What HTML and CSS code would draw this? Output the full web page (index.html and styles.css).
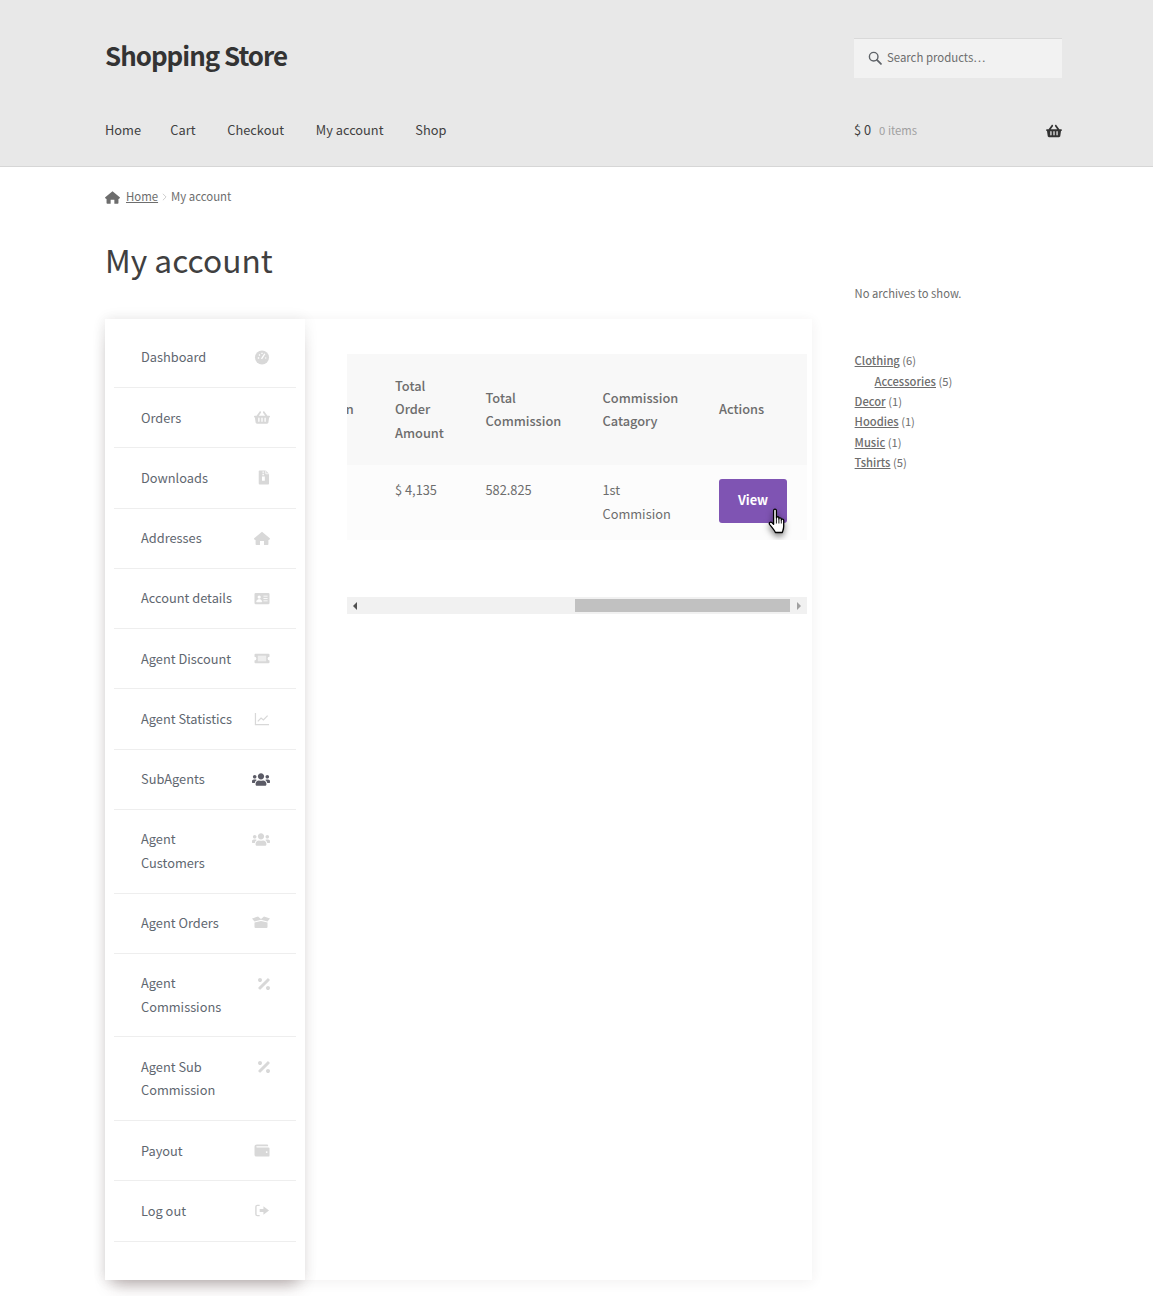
FILE: index.html
```html
<!DOCTYPE html>
<html lang="en">
<head>
    <meta charset="UTF-8">
    <meta name="viewport" content="width=device-width, initial-scale=1.0">
    <title>My account - Shopping Store</title>
    <link rel="stylesheet" href="styles.css">
</head>
<body>
    <header class="site-header">
        <div class="container">
            <div class="header-top">
                <a class="site-title" href="#">Shopping Store</a>
                <form class="search-box">
                    <svg class="search-icon" viewBox="0 0 16 16"><circle cx="6.5" cy="6.5" r="4.9" fill="none" stroke="currentColor" stroke-width="1.6"/><path d="M10.2 10.2l4.6 4.6" stroke="currentColor" stroke-width="2" stroke-linecap="round"/></svg>
                    <input class="search-input" type="text" placeholder="Search products…">
                </form>
            </div>
            <div class="header-nav">
                <nav class="main-nav">
                    <a href="#">Home</a>
                    <a href="#">Cart</a>
                    <a href="#">Checkout</a>
                    <a href="#">My account</a>
                    <a href="#">Shop</a>
                </nav>
                <a class="mini-cart" href="#">
                    <span class="cart-total">$ 0</span>
                    <span class="cart-count">0 items</span>
                    <svg class="cart-icon" viewBox="0 0 576 512"><path d="M576 216v16c0 13.255-10.745 24-24 24h-8l-26.113 182.788C514.509 462.435 494.257 480 470.37 480H105.63c-23.887 0-44.139-17.565-47.518-41.212L32 256h-8c-13.255 0-24-10.745-24-24v-16c0-13.255 10.745-24 24-24h67.341l106.78-146.821c10.395-14.292 30.407-17.453 44.701-7.058 14.293 10.395 17.453 30.408 7.058 44.701L170.477 192h235.046L326.12 82.821c-10.395-14.292-7.234-34.306 7.059-44.701 14.291-10.395 34.306-7.235 44.701 7.058L484.659 192H552c13.255 0 24 10.745 24 24zM312 392V280c0-13.255-10.745-24-24-24s-24 10.745-24 24v112c0 13.255 10.745 24 24 24s24-10.745 24-24zm112 0V280c0-13.255-10.745-24-24-24s-24 10.745-24 24v112c0 13.255 10.745 24 24 24s24-10.745 24-24zm-224 0V280c0-13.255-10.745-24-24-24s-24 10.745-24 24v112c0 13.255 10.745 24 24 24s24-10.745 24-24z"/></svg>
                </a>
            </div>
        </div>
    </header>

    <div class="container">
        <div class="breadcrumb">
            <svg class="crumb-home" viewBox="0 0 16 14"><path d="M8 .3l7.800 6.500a.5.5 0 0 1 .1.7l-.8.9a.5.5 0 0 1-.7 0v4.400a.8.8 0 0 1-.8.8H10V9.500H6v4.100H2.400a.8.8 0 0 1-.8-.8V8.400a.5.5 0 0 1-.7 0l-.8-.9a.5.5 0 0 1 .1-.7z"/></svg>
            <a href="#">Home</a>
            <svg class="crumb-sep" viewBox="0 0 6 10"><path d="M1 1l4 4-4 4" fill="none" stroke="currentColor" stroke-width="1.2"/></svg>
            <span>My account</span>
        </div>

        <div class="columns">
            <main class="primary">
                <h1 class="page-title">My account</h1>
                <div class="account-panel">
                    <ul class="account-menu">
                        <li class="menu-item"><a href="#">Dashboard</a>
                            <svg class="menu-icon" viewBox="0 0 16 16"><circle cx="8" cy="8" r="7.500"/><path d="M7.500 9.500l3.500-5.500M3.500 8.500h1.500M4.800 4.800l1 1M8 2.800v1.500M11.500 8.500h1" stroke="#fff" stroke-width="1.400" fill="none"/></svg></li>
                        <li class="menu-item"><a href="#">Orders</a>
                            <svg class="menu-icon" viewBox="0 0 576 512"><path d="M576 216v16c0 13.255-10.745 24-24 24h-8l-26.113 182.788C514.509 462.435 494.257 480 470.37 480H105.63c-23.887 0-44.139-17.565-47.518-41.212L32 256h-8c-13.255 0-24-10.745-24-24v-16c0-13.255 10.745-24 24-24h67.341l106.78-146.821c10.395-14.292 30.407-17.453 44.701-7.058 14.293 10.395 17.453 30.408 7.058 44.701L170.477 192h235.046L326.12 82.821c-10.395-14.292-7.234-34.306 7.059-44.701 14.291-10.395 34.306-7.235 44.701 7.058L484.659 192H552c13.255 0 24 10.745 24 24zM312 392V280c0-13.255-10.745-24-24-24s-24 10.745-24 24v112c0 13.255 10.745 24 24 24s24-10.745 24-24zm112 0V280c0-13.255-10.745-24-24-24s-24 10.745-24 24v112c0 13.255 10.745 24 24 24s24-10.745 24-24zm-224 0V280c0-13.255-10.745-24-24-24s-24 10.745-24 24v112c0 13.255 10.745 24 24 24s24-10.745 24-24z"/></svg></li>
                        <li class="menu-item"><a href="#">Downloads</a>
                            <svg class="menu-icon" viewBox="0 0 16 16"><path d="M5.500.5h6.500l3.500 3.500v10.500a1 1 0 0 1-1 1h-9a1 1 0 0 1-1-1v-13a1 1 0 0 1 1-1z"/><path d="M8.500 1.500h1.500v1.500H8.500zM8.500 4h1.500v1.500H8.500zM8 7h3v4.500H8z" fill="#fff"/><path d="M12 .5v3.500h3.500" fill="none" stroke="#fff" stroke-width=".8"/></svg></li>
                        <li class="menu-item"><a href="#">Addresses</a>
                            <svg class="menu-icon" viewBox="0 0 16 14"><path d="M8 .3l7.800 6.500a.5.5 0 0 1 .1.7l-.8.9a.5.5 0 0 1-.7 0v4.400a.8.8 0 0 1-.8.8H10V9.500H6v4.100H2.400a.8.8 0 0 1-.8-.8V8.400a.5.5 0 0 1-.7 0l-.8-.9a.5.5 0 0 1 .1-.7z"/></svg></li>
                        <li class="menu-item"><a href="#">Account details</a>
                            <svg class="menu-icon" viewBox="0 0 16 16"><rect x="0" y="2" width="16" height="12" rx="1.300"/><circle cx="5" cy="6.500" r="1.700" fill="#fff"/><path d="M2.300 11.500c0-3.200 5.400-3.200 5.400 0zM9.500 5.500h4.500M9.500 8h4.500M9.500 10.500h4.500" fill="#fff" stroke="#fff" stroke-width=".9"/></svg></li>
                        <li class="menu-item"><a href="#">Agent Discount</a>
                            <svg class="menu-icon" viewBox="0 0 16 16"><path d="M1 3h14a1 1 0 0 1 1 1v2a2 2 0 0 0 0 4v2a1 1 0 0 1-1 1H1a1 1 0 0 1-1-1v-2a2 2 0 0 0 0-4V4a1 1 0 0 1 1-1z"/><rect x="3.500" y="5" width="9" height="6" fill="#eee"/></svg></li>
                        <li class="menu-item"><a href="#">Agent Statistics</a>
                            <svg class="menu-icon" viewBox="0 0 16 16"><path d="M1 2v12.500h14.500" fill="none" stroke="currentColor" stroke-width="1.300"/><path d="M3.500 11l3.500-3.500 2.500 2L14 5" fill="none" stroke="currentColor" stroke-width="1.300"/></svg></li>
                        <li class="menu-item menu-item-active"><a href="#">SubAgents</a>
                            <svg class="menu-icon menu-icon-wide" viewBox="0 0 640 512"><path d="M96 224c35.3 0 64-28.7 64-64s-28.700-64-64-64-64 28.700-64 64 28.700 64 64 64zm448 0c35.300 0 64-28.700 64-64s-28.700-64-64-64-64 28.700-64 64 28.700 64 64 64zm32 32h-64c-17.600 0-33.500 7.100-45.100 18.600 40.300 22.100 68.900 62 75.100 109.400h66c17.700 0 32-14.300 32-32v-32c0-35.300-28.700-64-64-64zm-256 0c61.900 0 112-50.100 112-112S381.900 32 320 32 208 82.100 208 144s50.100 112 112 112zm76.800 32h-8.300c-20.800 10-43.900 16-68.500 16s-47.600-6-68.500-16h-8.300C179.600 288 128 339.600 128 403.200V432c0 26.500 21.500 48 48 48h288c26.500 0 48-21.500 48-48v-28.800c0-63.600-51.600-115.200-115.200-115.200zm-223.700-13.400C161.500 263.100 145.600 256 128 256H64c-35.300 0-64 28.700-64 64v32c0 17.700 14.300 32 32 32h65.900c6.300-47.400 34.900-87.300 75.200-109.400z"/></svg></li>
                        <li class="menu-item"><a href="#">Agent Customers</a>
                            <svg class="menu-icon menu-icon-wide" viewBox="0 0 640 512"><path d="M96 224c35.300 0 64-28.700 64-64s-28.700-64-64-64-64 28.700-64 64 28.700 64 64 64zm448 0c35.300 0 64-28.700 64-64s-28.700-64-64-64-64 28.700-64 64 28.700 64 64 64zm32 32h-64c-17.600 0-33.500 7.100-45.100 18.600 40.300 22.100 68.900 62 75.100 109.400h66c17.700 0 32-14.300 32-32v-32c0-35.300-28.700-64-64-64zm-256 0c61.900 0 112-50.100 112-112S381.900 32 320 32 208 82.100 208 144s50.100 112 112 112zm76.800 32h-8.300c-20.800 10-43.900 16-68.500 16s-47.600-6-68.500-16h-8.300C179.600 288 128 339.600 128 403.200V432c0 26.500 21.500 48 48 48h288c26.500 0 48-21.500 48-48v-28.800c0-63.600-51.600-115.200-115.200-115.200zm-223.700-13.400C161.500 263.100 145.600 256 128 256H64c-35.300 0-64 28.700-64 64v32c0 17.700 14.300 32 32 32h65.900c6.300-47.400 34.900-87.300 75.200-109.400z"/></svg></li>
                        <li class="menu-item"><a href="#">Agent Orders</a>
                            <svg class="menu-icon menu-icon-wide" viewBox="0 0 18 13"><path d="M0 2.500L6 .5 9 3l3-2.500 6 2L15.500 5.500 9 3.800 2.500 5.500z"/><path d="M2.500 6.500L9 5l6.500 1.500V11a1 1 0 0 1-1 1h-11a1 1 0 0 1-1-1z"/></svg></li>
                        <li class="menu-item"><a href="#">Agent Commissions</a>
                            <svg class="menu-icon menu-icon-small" viewBox="0 0 384 512"><path d="M109.250 173.250c24.990-24.990 24.990-65.520 0-90.510-24.990-24.990-65.520-24.990-90.510 0-24.990 24.990-24.990 65.520 0 90.510 25 25 65.520 25 90.510 0zm256 165.490c-24.990-24.990-65.520-24.990-90.510 0-24.990 24.990-24.990 65.520 0 90.510 24.990 24.990 65.520 24.990 90.510 0 25-24.990 25-65.510 0-90.510zm-1.940-231.430l-22.620-22.620c-12.500-12.500-32.760-12.500-45.250 0L20.690 359.440c-12.500 12.500-12.500 32.760 0 45.250l22.620 22.620c12.500 12.500 32.760 12.500 45.250 0l274.750-274.750c12.500-12.490 12.500-32.750 0-45.250z"/></svg></li>
                        <li class="menu-item"><a href="#">Agent Sub Commission</a>
                            <svg class="menu-icon menu-icon-small" viewBox="0 0 384 512"><path d="M109.250 173.250c24.990-24.990 24.990-65.520 0-90.510-24.990-24.990-65.520-24.990-90.510 0-24.990 24.990-24.990 65.520 0 90.510 25 25 65.520 25 90.510 0zm256 165.490c-24.990-24.990-65.520-24.990-90.510 0-24.990 24.990-24.990 65.520 0 90.510 24.990 24.990 65.520 24.990 90.510 0 25-24.990 25-65.510 0-90.510zm-1.940-231.430l-22.620-22.620c-12.500-12.500-32.760-12.500-45.250 0L20.690 359.440c-12.500 12.500-12.500 32.760 0 45.250l22.620 22.620c12.500 12.500 32.760 12.500 45.250 0l274.750-274.750c12.500-12.490 12.500-32.750 0-45.250z"/></svg></li>
                        <li class="menu-item"><a href="#">Payout</a>
                            <svg class="menu-icon" viewBox="0 0 16 16"><path d="M2.500 1.500h11a1 1 0 0 1 1 1v1H2.500a.6.6 0 0 0 0 1.200H15a1 1 0 0 1 1 1v7.800a1 1 0 0 1-1 1H2a2 2 0 0 1-2-2V4a2.500 2.500 0 0 1 2.500-2.500z"/><circle cx="13" cy="9.700" r="1" fill="#fff"/></svg></li>
                        <li class="menu-item"><a href="#">Log out</a>
                            <svg class="menu-icon" viewBox="0 0 16 16"><path d="M5.500 2.500H3A1.500 1.500 0 0 0 1.500 4v8A1.500 1.500 0 0 0 3 13.500h2.500" fill="none" stroke="currentColor" stroke-width="1.500"/><path d="M5.500 6.500h4V3.500L15.500 8l-6 4.500v-3h-4z"/></svg></li>
                    </ul>

                    <div class="account-content">
                        <div class="table-scroll">
                            <table class="orders-table">
                                <thead>
                                    <tr>
                                        <th class="col-status">Commission</th>
                                        <th class="col-amount">Total Order Amount</th>
                                        <th class="col-total">Total Commission</th>
                                        <th class="col-cat">Commission Catagory</th>
                                        <th class="col-action">Actions</th>
                                    </tr>
                                </thead>
                                <tbody>
                                    <tr>
                                        <td></td>
                                        <td>$ 4,135</td>
                                        <td>582.825</td>
                                        <td>1st Commision</td>
                                        <td>
                                            <a class="view-btn" href="#">View
                                                <svg class="hand-cursor" viewBox="0 0 18 27"><path d="M5.600 2.400c0-1.800 2.800-1.800 2.800 0v7.400c0-1.400 2.500-1.400 2.500 0v1c0-1.300 2.400-1.300 2.400.2v.9c0-1.300 2.400-1.100 2.400.4v5.900c0 2.800-.8 4.200-1.400 6.300H7.400c-1.200-2.600-3-4.700-5.700-7.900-1.200-1.600.7-3.200 2.200-2l1.700 1.700z" fill="#fff" stroke="#000" stroke-width="1.300" stroke-linejoin="round"/><path d="M8.400 10v5.500M10.900 10.800v4.700M13.300 12v3.500" stroke="#000" stroke-width=".9" fill="none"/></svg>
                                            </a>
                                        </td>
                                    </tr>
                                </tbody>
                            </table>
                        </div>
                        <div class="fake-scrollbar">
                            <span class="scroll-arrow scroll-arrow-left"></span>
                            <div class="scroll-track"><div class="scroll-thumb"></div></div>
                            <span class="scroll-arrow scroll-arrow-right"></span>
                        </div>
                    </div>
                </div>
            </main>

            <aside class="sidebar">
                <p class="no-archives">No archives to show.</p>
                <ul class="cat-list">
                    <li><a href="#">Clothing</a> (6)
                        <ul class="cat-children">
                            <li><a href="#">Accessories</a> (5)</li>
                        </ul>
                    </li>
                    <li><a href="#">Decor</a> (1)</li>
                    <li><a href="#">Hoodies</a> (1)</li>
                    <li><a href="#">Music</a> (1)</li>
                    <li><a href="#">Tshirts</a> (5)</li>
                </ul>
            </aside>
        </div>
    </div>
</body>
</html>
```

FILE: styles.css
```css
* {
    margin: 0;
    padding: 0;
    box-sizing: border-box;
}

body {
    font-family: "Noto Sans CJK SC", "Open Sans", sans-serif;
    font-size: 12.8px;
    line-height: 23.46px;
    color: #6d6d6d;
    background: #fff;
}

a {
    color: inherit;
    text-decoration: none;
}

ul {
    list-style: none;
}

.container {
    width: 957px;
    margin-left: 105px;
}

.site-header {
    height: 167px;
    background: #e8e8e8;
    border-bottom: 1px solid #d6d6d6;
    padding-top: 38px;
}

.header-top {
    display: flex;
    justify-content: space-between;
    align-items: center;
    height: 40px;
}

.site-title {
    padding-bottom: 7px;
    font-size: 25.9px;
    line-height: 36px;
    font-weight: 700;
    letter-spacing: -1px;
    color: #333;
}

.search-box {
    width: 208px;
    height: 40px;
    display: flex;
    align-items: center;
    gap: 5px;
    padding: 0 0 2px 14px;
    background: #f2f2f2;
    border-top: 1px solid #d9d9d9;
}

.search-icon {
    width: 14px;
    height: 14px;
    color: #5f6368;
}

.search-input {
    flex: 1;
    border: none;
    background: transparent;
    font: inherit;
    font-size: 11.4px;
    outline: none;
    min-width: 0;
}

.search-input::placeholder {
    color: #6d6d6d;
    opacity: 1;
}

.header-nav {
    display: flex;
    justify-content: space-between;
    align-items: center;
    margin-top: 40px;
    height: 24px;
}

.main-nav {
    display: flex;
    gap: 31.8px;
    color: #404040;
}

.main-nav a:first-child {
    margin-right: -2.5px;
}

.mini-cart {
    width: 208px;
    display: flex;
    align-items: center;
    color: #404040;
}

.cart-count {
    margin: 2px 0 0 8px;
    font-size: 11.3px;
    color: #a0a0a0;
}

.cart-icon {
    width: 16px;
    height: 14px;
    margin: 2px 0 0 auto;
    fill: #333;
}

.breadcrumb {
    display: flex;
    align-items: center;
    height: 20px;
    margin-top: 20px;
    font-size: 11.4px;
}

.breadcrumb a {
    text-decoration: underline;
}

.crumb-home {
    width: 15px;
    height: 13px;
    margin-right: 6px;
    fill: #6d6d6d;
}

.crumb-sep {
    width: 5px;
    height: 8px;
    margin: 0 4px;
    color: #ccc;
}

.columns {
    display: flex;
    padding-bottom: 16px;
}

.primary {
    width: 707px;
}

.page-title {
    margin-top: 24px;
    font-size: 31.7px;
    font-weight: 400;
    line-height: 56px;
    color: #404040;
}

.account-panel {
    display: flex;
    margin-top: 32px;
    background: #fff;
    box-shadow: 0 2px 12px rgba(60, 40, 40, 0.07);
}

.account-menu {
    position: relative;
    width: 200px;
    flex-shrink: 0;
    padding: 9px 9px 38px;
    background: #fff;
    box-shadow: 0 12px 16px -8px rgba(70, 40, 40, 0.35), 0 0 14px rgba(0, 0, 0, 0.07);
}

.menu-item {
    display: flex;
    justify-content: space-between;
    align-items: flex-start;
    padding: 17.4px 26px 18.4px 27px;
    border-bottom: 1px solid #eee;
    color: #5f6770;
}

.menu-item a {
    width: 95px;
}

.menu-icon {
    width: 16px;
    height: 15px;
    margin-top: 4.5px;
    fill: #d8d8d8;
    color: #d8d8d8;
    flex-shrink: 0;
}

.menu-icon-wide {
    width: 18px;
    margin-right: 0.5px;
}

.menu-icon-small {
    width: 12px;
    height: 16px;
}

.menu-item-active .menu-icon {
    fill: #5b5b66;
}

.account-content {
    flex: 1;
    min-width: 0;
    padding: 35px 5px 0 42px;
}

.table-scroll {
    overflow: hidden;
}

.orders-table {
    width: 549px;
    margin-left: -89px;
    table-layout: fixed;
    border-collapse: collapse;
}

.orders-table th {
    padding: 20px 20px 20.6px;
    background: #f8f8f8;
    font-weight: 500;
    text-align: left;
    color: #6d6d6d;
}

.orders-table td {
    padding: 13.5px 20px 14.5px;
    background: #fcfcfc;
    vertical-align: top;
}

.col-status { width: 117px; }
.col-amount { width: 90.5px; }
.col-total { width: 117px; }
.col-cat { width: 116.5px; }
.col-action { width: 108px; }

.view-btn {
    position: relative;
    display: flex;
    justify-content: center;
    align-items: center;
    width: 68px;
    height: 44px;
    margin-top: 0.5px;
    padding-bottom: 2px;
    background: #7f54b3;
    border-radius: 3px;
    color: #fff;
    font-weight: 700;
}

.hand-cursor {
    position: absolute;
    left: 49px;
    top: 29px;
    width: 18px;
    height: 27px;
    filter: drop-shadow(0 3px 3px rgba(0, 0, 0, 0.5));
}

.fake-scrollbar {
    display: flex;
    height: 17px;
    margin-top: 57px;
    background: #f1f1f1;
}

.scroll-arrow {
    width: 17px;
    position: relative;
}

.scroll-arrow::after {
    content: "";
    position: absolute;
    top: 5px;
    border-top: 4px solid transparent;
    border-bottom: 4px solid transparent;
}

.scroll-arrow-left::after {
    left: 6px;
    border-right: 4px solid #505050;
}

.scroll-arrow-right::after {
    left: 7px;
    border-left: 4px solid #a0a0a0;
}

.scroll-track {
    flex: 1;
    padding: 2px 0 2px 211px;
}

.scroll-thumb {
    height: 13px;
    background: #c1c1c1;
}

.sidebar {
    width: 207px;
    margin-left: 42.6px;
    font-size: 11.2px;
}

.no-archives {
    margin-top: 76px;
    line-height: 20.4px;
}

.cat-list {
    margin-top: 46.7px;
    line-height: 20.4px;
}

.cat-list a {
    font-weight: 500;
    text-decoration: underline;
}

.cat-children {
    padding-left: 20px;
}
```
